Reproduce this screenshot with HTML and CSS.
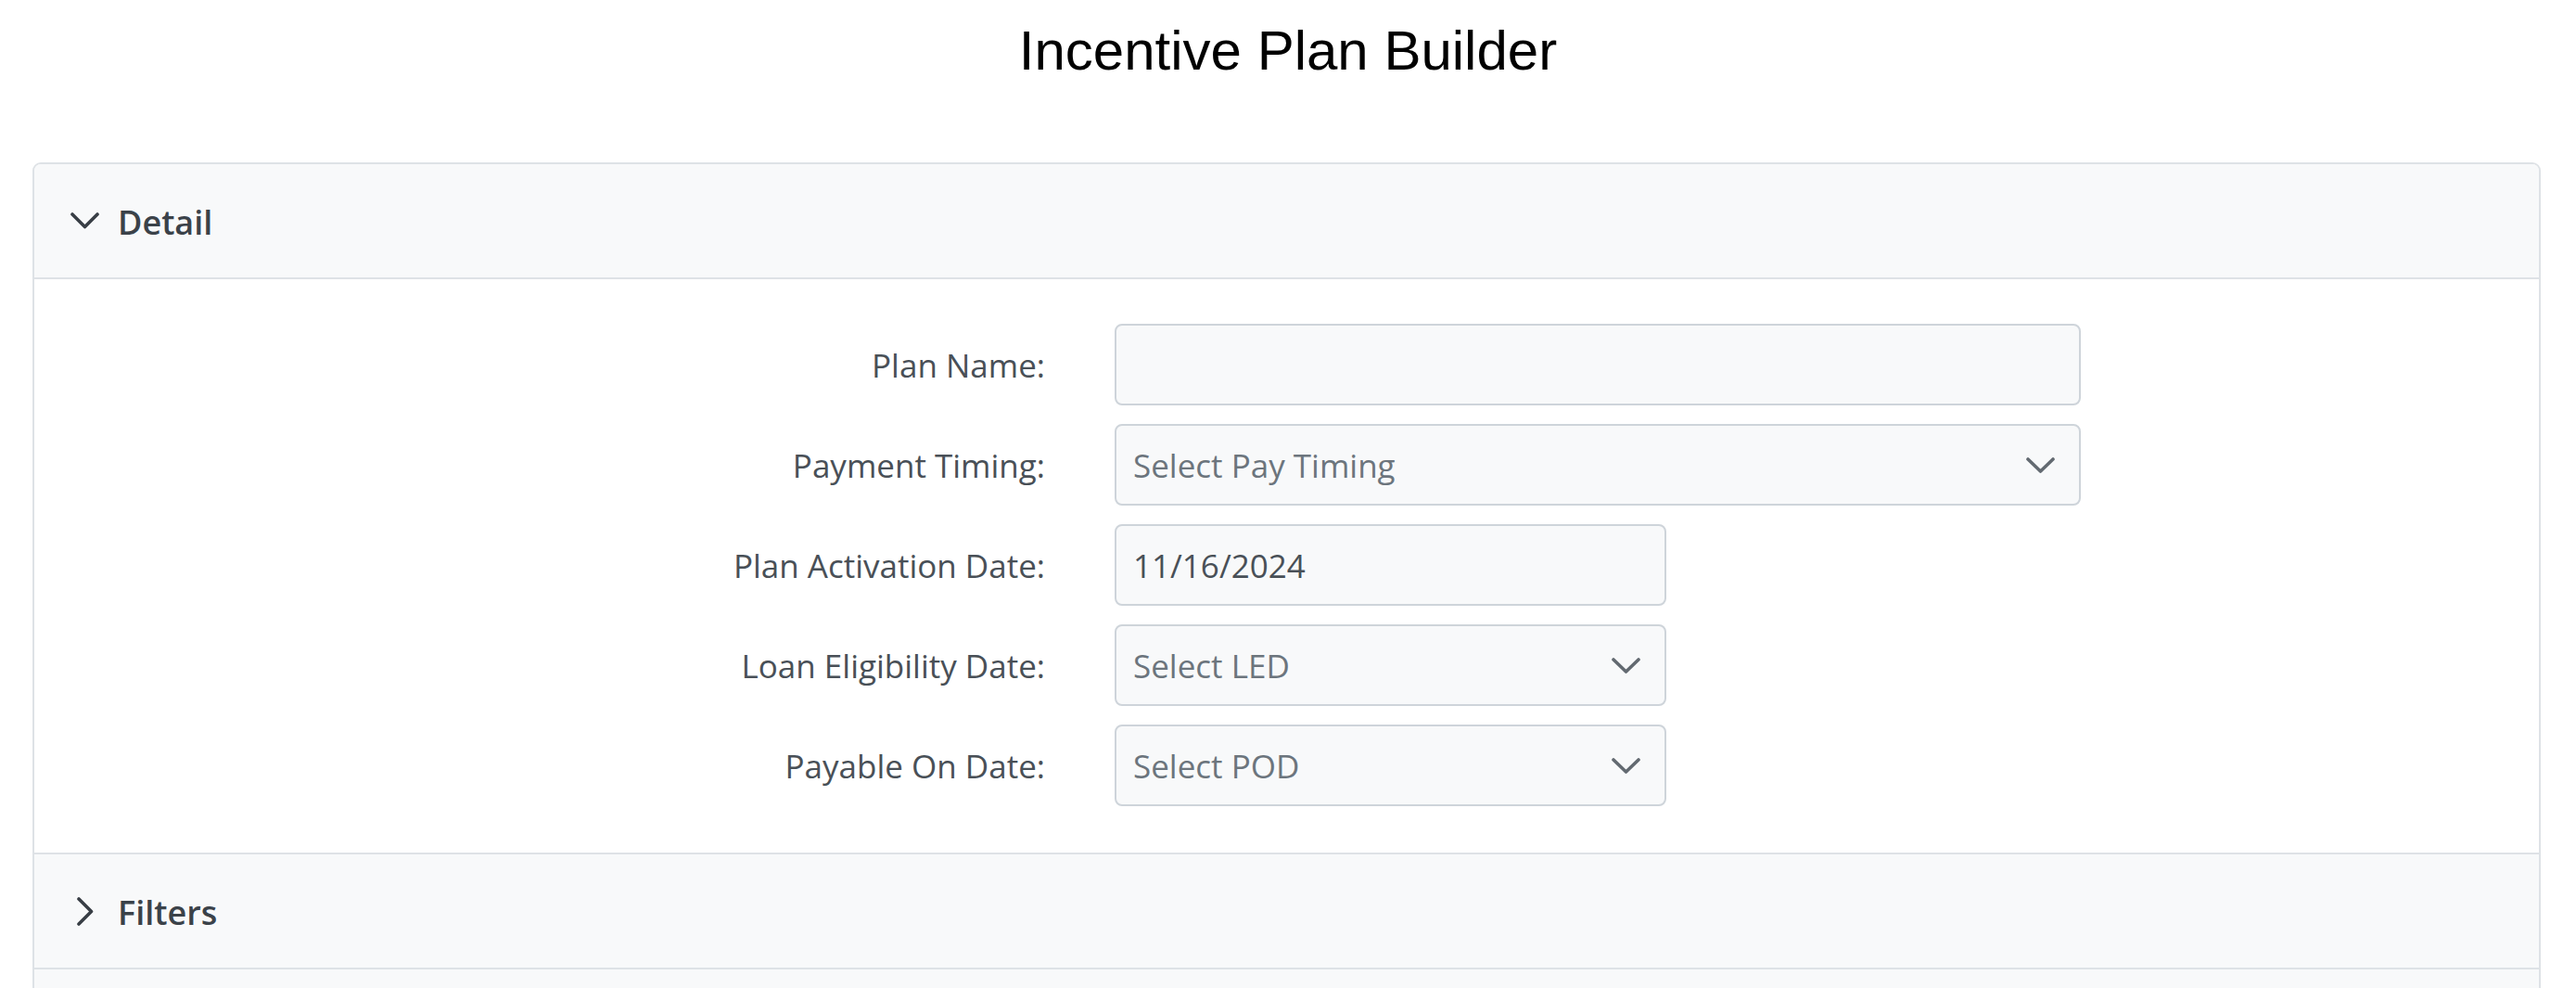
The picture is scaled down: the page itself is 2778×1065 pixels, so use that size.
FILE: index.html
```html
<!DOCTYPE html>
<html lang="en">
<head>
<meta charset="utf-8">
<title>Incentive Plan Builder</title>
<link rel="stylesheet" href="styles.css">
</head>
<body>
<h1 class="page-title">Incentive Plan Builder</h1>

<div class="accordion">
  <section class="acc-item">
    <button class="acc-header" type="button">
      <span class="acc-icon open">
        <svg width="31" height="18" viewBox="0 0 31 18"><polyline points="2,2 15.5,15.5 29,2" fill="none" stroke="#383e45" stroke-width="3.6" stroke-linecap="round" stroke-linejoin="round"/></svg>
      </span>
      <span class="acc-title">Detail</span>
    </button>
    <div class="acc-body">
      <div class="form-grid">
        <label class="field-label" for="planName">Plan Name:</label>
        <input class="field wide" id="planName" type="text">

        <label class="field-label">Payment Timing:</label>
        <div class="field wide select"><span class="placeholder">Select Pay Timing</span>
          <svg class="caret" width="31" height="17" viewBox="0 0 31 17"><polyline points="2,2 15.5,15 29,2" fill="none" stroke="#636a71" stroke-width="3.6" stroke-linecap="round" stroke-linejoin="round"/></svg>
        </div>

        <label class="field-label" for="actDate">Plan Activation Date:</label>
        <input class="field short" id="actDate" type="text" value="11/16/2024">

        <label class="field-label">Loan Eligibility Date:</label>
        <div class="field short select"><span class="placeholder">Select LED</span>
          <svg class="caret" width="31" height="17" viewBox="0 0 31 17"><polyline points="2,2 15.5,15 29,2" fill="none" stroke="#636a71" stroke-width="3.6" stroke-linecap="round" stroke-linejoin="round"/></svg>
        </div>

        <label class="field-label">Payable On Date:</label>
        <div class="field short select"><span class="placeholder">Select POD</span>
          <svg class="caret" width="31" height="17" viewBox="0 0 31 17"><polyline points="2,2 15.5,15 29,2" fill="none" stroke="#636a71" stroke-width="3.6" stroke-linecap="round" stroke-linejoin="round"/></svg>
        </div>
      </div>
    </div>
  </section>

  <section class="acc-item">
    <button class="acc-header" type="button">
      <span class="acc-icon closed">
        <svg width="31" height="18" viewBox="0 0 31 18"><polyline points="2,2 15.5,15.5 29,2" fill="none" stroke="#383e45" stroke-width="3.6" stroke-linecap="round" stroke-linejoin="round"/></svg>
      </span>
      <span class="acc-title">Filters</span>
    </button>
  </section>

  <section class="acc-item">
    <div class="acc-header acc-header-empty"></div>
  </section>
</div>
</body>
</html>
```

FILE: styles.css
```css
* {
  box-sizing: border-box;
}

html, body {
  margin: 0;
  padding: 0;
  background: #ffffff;
}

body {
  font-family: "Open Sans", "Noto Sans", sans-serif;
  color: #495057;
}

.page-title {
  margin: 21px 0 0;
  font-family: "Liberation Sans", Arial, sans-serif;
  font-weight: 400;
  font-size: 60px;
  line-height: 67px;
  color: #000000;
  text-align: center;
}

.accordion {
  margin: 87px 38px 0 35px;
  border: 2px solid #dee2e6;
  border-radius: 9px;
  overflow: hidden;
}

.acc-item + .acc-item {
  border-top: 2px solid #dee2e6;
}

.acc-header {
  display: flex;
  align-items: center;
  gap: 20px;
  width: 100%;
  height: 122px;
  margin: 0;
  padding: 3px 0 0 39px;
  border: 0;
  background: #f8f9fa;
  font-family: "Open Sans", "Noto Sans", sans-serif;
  font-size: 36px;
  font-weight: 600;
  color: #3b4249;
  text-align: left;
  cursor: pointer;
}

.acc-icon {
  display: flex;
  align-items: center;
  justify-content: center;
  width: 31px;
  height: 31px;
  margin-top: -3px;
}

.acc-icon.closed {
  transform: rotate(-90deg);
}

.acc-body {
  border-top: 2px solid #dee2e6;
  background: #ffffff;
  padding: 48px 0 50px;
}

.form-grid {
  display: grid;
  grid-template-columns: 1090px 1fr;
  column-gap: 75px;
  row-gap: 20px;
  align-items: center;
}

.field-label {
  text-align: right;
  font-size: 35px;
  line-height: 48px;
  padding-top: 1px;
  color: #495057;
}

.field {
  display: flex;
  align-items: center;
  height: 88px;
  margin: 0;
  padding: 0 26px 0 18px;
  border: 2px solid #ced4da;
  border-radius: 8px;
  background: #f8f9fa;
  font-family: "Open Sans", "Noto Sans", sans-serif;
  font-size: 35px;
  color: #495057;
  outline: none;
}

.field.wide {
  width: 1042px;
}

.field.short {
  width: 595px;
}

.select {
  justify-content: space-between;
}

.placeholder {
  color: #6c757d;
}

.caret {
  flex: none;
}
```
